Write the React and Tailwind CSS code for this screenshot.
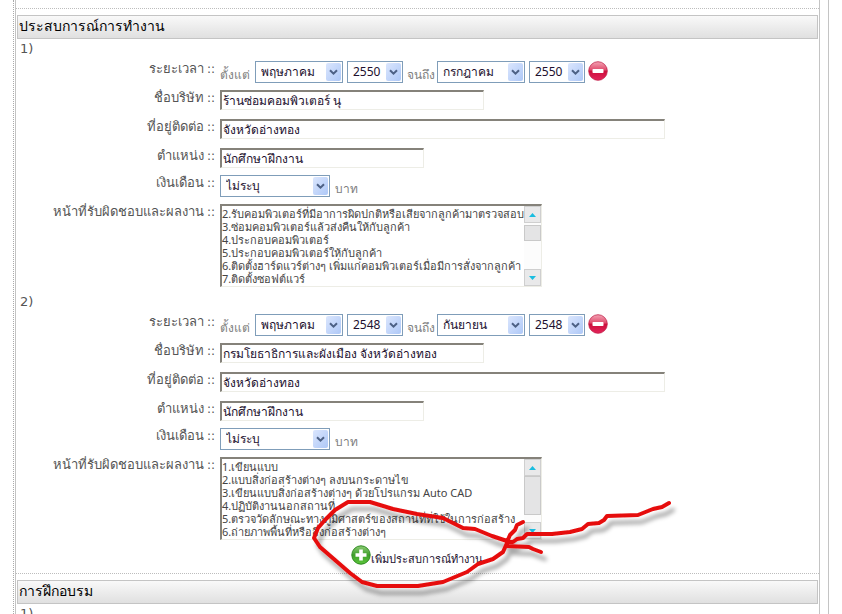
import React from "react";

const MONTHS = ["มกราคม", "กุมภาพันธ์", "มีนาคม", "เมษายน", "พฤษภาคม", "มิถุนายน", "กรกฎาคม", "สิงหาคม", "กันยายน", "ตุลาคม", "พฤศจิกายน", "ธันวาคม"];
const YEARS = ["2547", "2548", "2549", "2550", "2551"];

const JOBS = [
  {
    from: ["พฤษภาคม", "2550"],
    to: ["กรกฎาคม", "2550"],
    company: "ร้านซ่อมคอมพิวเตอร์ นุ",
    address: "จังหวัดอ่างทอง",
    position: "นักศึกษาฝึกงาน",
    duties: [
      "2.รับคอมพิวเตอร์ที่มีอาการผิดปกติหรือเสียจากลูกค้ามาตรวจสอบ",
      "3.ซ่อมคอมพิวเตอร์แล้วส่งคืนให้กับลูกค้า",
      "4.ประกอบคอมพิวเตอร์",
      "5.ประกอบคอมพิวเตอร์ให้กับลูกค้า",
      "6.ติดตั้งฮาร์ดแวร์ต่างๆ เพิ่มแก่คอมพิวเตอร์เมื่อมีการสั่งจากลูกค้า",
      "7.ติดตั้งซอฟต์แวร์",
    ],
    thumb: "mt-[2px] h-[16px]",
  },
  {
    from: ["พฤษภาคม", "2548"],
    to: ["กันยายน", "2548"],
    company: "กรมโยธาธิการและผังเมือง จังหวัดอ่างทอง",
    address: "จังหวัดอ่างทอง",
    position: "นักศึกษาฝึกงาน",
    duties: [
      "1.เขียนแบบ",
      "2.แบบสิ่งก่อสร้างต่างๆ ลงบนกระดาษไข",
      "3.เขียนแบบสิ่งก่อสร้างต่างๆ ด้วยโปรแกรม Auto CAD",
      "4.ปฏิบัติงานนอกสถานที่",
      "5.ตรวจวัดลักษณะทางภูมิศาสตร์ของสถานที่ที่ใช้ในการก่อสร้าง",
      "6.ถ่ายภาพพื้นที่หรือสิ่งก่อสร้างต่างๆ",
    ],
    thumb: "h-[39px]",
  },
];

function SectionTitle({ children }) {
  return (
    <div className="border-t border-dotted border-[#bdbdbd] pt-[6px]">
      <h2 className="mx-px h-6 border border-[#c4c4c4] bg-linear-to-b from-[#f9f9f9] to-[#e0e0e0] px-px text-[14px] leading-5 text-black">
        {children}
      </h2>
    </div>
  );
}

function Select({ id, label, options, value, width }) {
  return (
    <span className={`relative block h-[22px] shrink-0 ${width}`}>
      <select
        id={id}
        aria-label={label}
        defaultValue={value}
        className="block h-full w-full appearance-none border border-[#7f9db9] bg-white pl-[5px] text-[12px] leading-5 text-[#22102e]"
      >
        {options.map((o) => (
          <option key={o}>{o}</option>
        ))}
      </select>
      <span className="pointer-events-none absolute top-[2px] right-[2px] bottom-[2px] flex w-[15px] items-center justify-center rounded-xs bg-linear-to-br from-[#dbe6fd] to-[#aec8f7]">
        <svg width="9" height="7" viewBox="0 0 9 7" fill="none" stroke="#4d6185" strokeWidth="2">
          <path d="M1 1.2 L4.5 4.7 L8 1.2" />
        </svg>
      </span>
    </span>
  );
}

function Row({ label, htmlFor, height, children }) {
  return (
    <div className={`flex items-start gap-[5px] ${height}`}>
      <label htmlFor={htmlFor} className="w-[199px] shrink-0 text-right text-[13px] leading-[14px] text-[#555]">
        {label} <span className="font-['DejaVu_Sans',sans-serif] text-[12px]">::</span>
      </label>
      <div className="flex min-w-0 flex-1 items-start">{children}</div>
    </div>
  );
}

function TextInput({ id, value, width }) {
  return (
    <input
      id={id}
      type="text"
      defaultValue={value}
      className={`h-5 w-full border-t-2 border-r border-b border-l-2 border-t-[#85827a] border-r-[#ededE6] border-b-[#ededE6] border-l-[#85827a] bg-white px-px text-[12px] text-[#22102e] ${width}`}
    />
  );
}

function RemoveIcon() {
  return (
    <svg width="20" height="20" viewBox="0 0 20 20">
      <defs>
        <linearGradient id="removeFill" x1="0" y1="0" x2="0" y2="1">
          <stop offset="0" stopColor="#f3a3b4" />
          <stop offset="0.45" stopColor="#e04a6c" />
          <stop offset="0.5" stopColor="#cc0f3c" />
          <stop offset="1" stopColor="#e3245a" />
        </linearGradient>
      </defs>
      <circle cx="10" cy="10" r="9.3" fill="url(#removeFill)" stroke="#c2224a" strokeWidth="0.8" />
      <rect x="4.5" y="8" width="11" height="4" rx="0.8" fill="#fff" />
    </svg>
  );
}

function AddIcon() {
  return (
    <svg width="20" height="20" viewBox="0 0 20 20">
      <defs>
        <linearGradient id="addFill" x1="0" y1="0" x2="0" y2="1">
          <stop offset="0" stopColor="#8ccb74" />
          <stop offset="0.5" stopColor="#3f9f2b" />
          <stop offset="1" stopColor="#5cc63a" />
        </linearGradient>
      </defs>
      <circle cx="10" cy="10" r="9.2" fill="url(#addFill)" stroke="#2f8a22" strokeWidth="1" />
      <path d="M8.2 4.5h3.6v3.7h3.7v3.6h-3.7v3.7H8.2v-3.7H4.5V8.2h3.7z" fill="#fff" />
    </svg>
  );
}

function ScrollButton({ label, d }) {
  return (
    <button
      type="button"
      aria-label={label}
      className="flex h-[17px] w-full shrink-0 items-center justify-center border border-[#cfcfcf] bg-[#e9e9ea]"
    >
      <svg width="7" height="4" viewBox="0 0 7 4" fill="#19bde0">
        <path d={d} />
      </svg>
    </button>
  );
}

function Duties({ id, lines, thumb }) {
  return (
    <div className="flex h-[83px] w-full max-w-[322px] border-t-2 border-r border-b border-l-2 border-t-[#85827a] border-r-[#ededE6] border-b-[#ededE6] border-l-[#85827a]">
      <textarea
        id={id}
        defaultValue={lines.join("\n")}
        className="min-w-0 flex-1 resize-none overflow-hidden pt-px text-[11px] leading-[13px] whitespace-pre text-[#444]"
      />
      <div className="flex w-[17px] shrink-0 flex-col bg-[#fcfcfc]">
        <ScrollButton label="เลื่อนขึ้น" d="M0 4 L3.5 0 L7 4Z" />
        <div className={`w-full shrink-0 border border-[#c9c9c9] bg-[#e4e4e5] ${thumb}`} />
        <div className="flex-1" />
        <ScrollButton label="เลื่อนลง" d="M0 0 L3.5 4 L7 0Z" />
      </div>
    </div>
  );
}

function Job({ job, no }) {
  return (
    <fieldset>
      <legend className="h-[22px] pl-1 font-['DejaVu_Sans',sans-serif] text-[13px] leading-5 text-[#555]">{no})</legend>
      <Row label="ระยะเวลา" htmlFor={`from-${no}`} height="h-[29px]">
        <span className="mt-1 w-[35px] shrink-0 text-[12px] leading-5 text-[#808080]">ตั้งแต่</span>
        <Select id={`from-${no}`} label="เดือนที่เริ่ม" options={MONTHS} value={job.from[0]} width="w-[88px]" />
        <span className="w-1 shrink-0" />
        <Select label="ปีที่เริ่ม" options={YEARS} value={job.from[1]} width="w-[56px]" />
        <span className="mt-1 w-[34px] shrink-0 pl-1 text-[12px] leading-5 text-[#808080]">จนถึง</span>
        <Select label="เดือนที่สิ้นสุด" options={MONTHS} value={job.to[0]} width="w-[88px]" />
        <span className="w-1 shrink-0" />
        <Select label="ปีที่สิ้นสุด" options={YEARS} value={job.to[1]} width="w-[56px]" />
        <button type="button" aria-label="ลบ" className="ml-[3px] shrink-0">
          <RemoveIcon />
        </button>
      </Row>
      <Row label="ชื่อบริษัท" htmlFor={`company-${no}`} height="h-[29px]">
        <TextInput id={`company-${no}`} value={job.company} width="max-w-[264px]" />
      </Row>
      <Row label="ที่อยู่ติดต่อ" htmlFor={`address-${no}`} height="h-[29px]">
        <TextInput id={`address-${no}`} value={job.address} width="max-w-[445px]" />
      </Row>
      <Row label="ตำแหน่ง" htmlFor={`position-${no}`} height="h-[27px]">
        <TextInput id={`position-${no}`} value={job.position} width="max-w-[204px]" />
      </Row>
      <Row label="เงินเดือน" htmlFor={`salary-${no}`} height="h-[29px]">
        <Select id={`salary-${no}`} options={["ไม่ระบุ"]} value="ไม่ระบุ" width="w-[110px]" />
        <span className="mt-1 pl-[5px] text-[12px] leading-5 text-[#808080]">บาท</span>
      </Row>
      <Row label="หน้าที่รับผิดชอบและผลงาน" htmlFor={`duties-${no}`} height="h-[88px]">
        <Duties id={`duties-${no}`} lines={job.duties} thumb={job.thumb} />
      </Row>
    </fieldset>
  );
}

// Hand-drawn red circle and arrow pointing at the add button
function PenMark() {
  return (
    <svg
      className="pointer-events-none absolute top-[490px] left-[304px]"
      width="380"
      height="110"
      viewBox="304 490 380 110"
      fill="none"
      stroke="#e60f0f"
      strokeWidth="4"
      strokeLinecap="round"
      strokeLinejoin="round"
    >
      <defs>
        <filter id="penShadow" x="-10%" y="-20%" width="120%" height="150%">
          <feDropShadow dx="4" dy="7" stdDeviation="2" floodColor="#000" floodOpacity="0.35" />
        </filter>
      </defs>
      <g filter="url(#penShadow)">
        <path d="M510 542 L492 536 L475 529 L463 528 L443 518 L417 514 L393 509 L370 502 L348 502 L335 510 L325 520 L318 528 L314 538 L320 547 L335 560 L350 573 L362 582 L377 586 L418 586 L443 582 L467 572 L478 564 L493 559 L503 552 L507 543" />
        <path d="M669 503 L662 507 L653 509 L638 515 L607 516 L604 520 L599 523 L588 524 L582 529 L570 532 L552 534 L527 534 L523 538 L517 539 L513 542 L507 542 L510 535 L515 530 L517 525 L523 522" />
        <path d="M507 540 L507 546 L529 547 L533 549 L541 552" />
      </g>
    </svg>
  );
}

export default function App() {
  return (
    <div className="relative h-screen overflow-hidden bg-white px-[13px] font-['Noto_Sans','DejaVu_Sans',sans-serif]">
      <div className="h-full border-r border-l border-r-[#c4c4c4] border-l-[#aaa] pr-2 pl-px [border-left-style:dotted]">
        <main className="h-full border-r border-l border-[#c4c4c4] pt-2">
          <SectionTitle>ประสบการณ์การทำงาน</SectionTitle>
          {JOBS.map((job, i) => (
            <Job key={i} job={job} no={i + 1} />
          ))}
          <div className="flex h-[28px] pl-[335px]">
            <button type="button" className="flex h-[22px] items-start text-[11px] text-[#22102e]">
              <AddIcon />
              <span className="pt-[6px] leading-4">เพิ่มประสบการณ์ทำงาน</span>
            </button>
          </div>
          <SectionTitle>การฝึกอบรม</SectionTitle>
          <div className="pl-1 font-['DejaVu_Sans',sans-serif] text-[13px] leading-5 text-[#555]">1)</div>
        </main>
      </div>
      <PenMark />
    </div>
  );
}
